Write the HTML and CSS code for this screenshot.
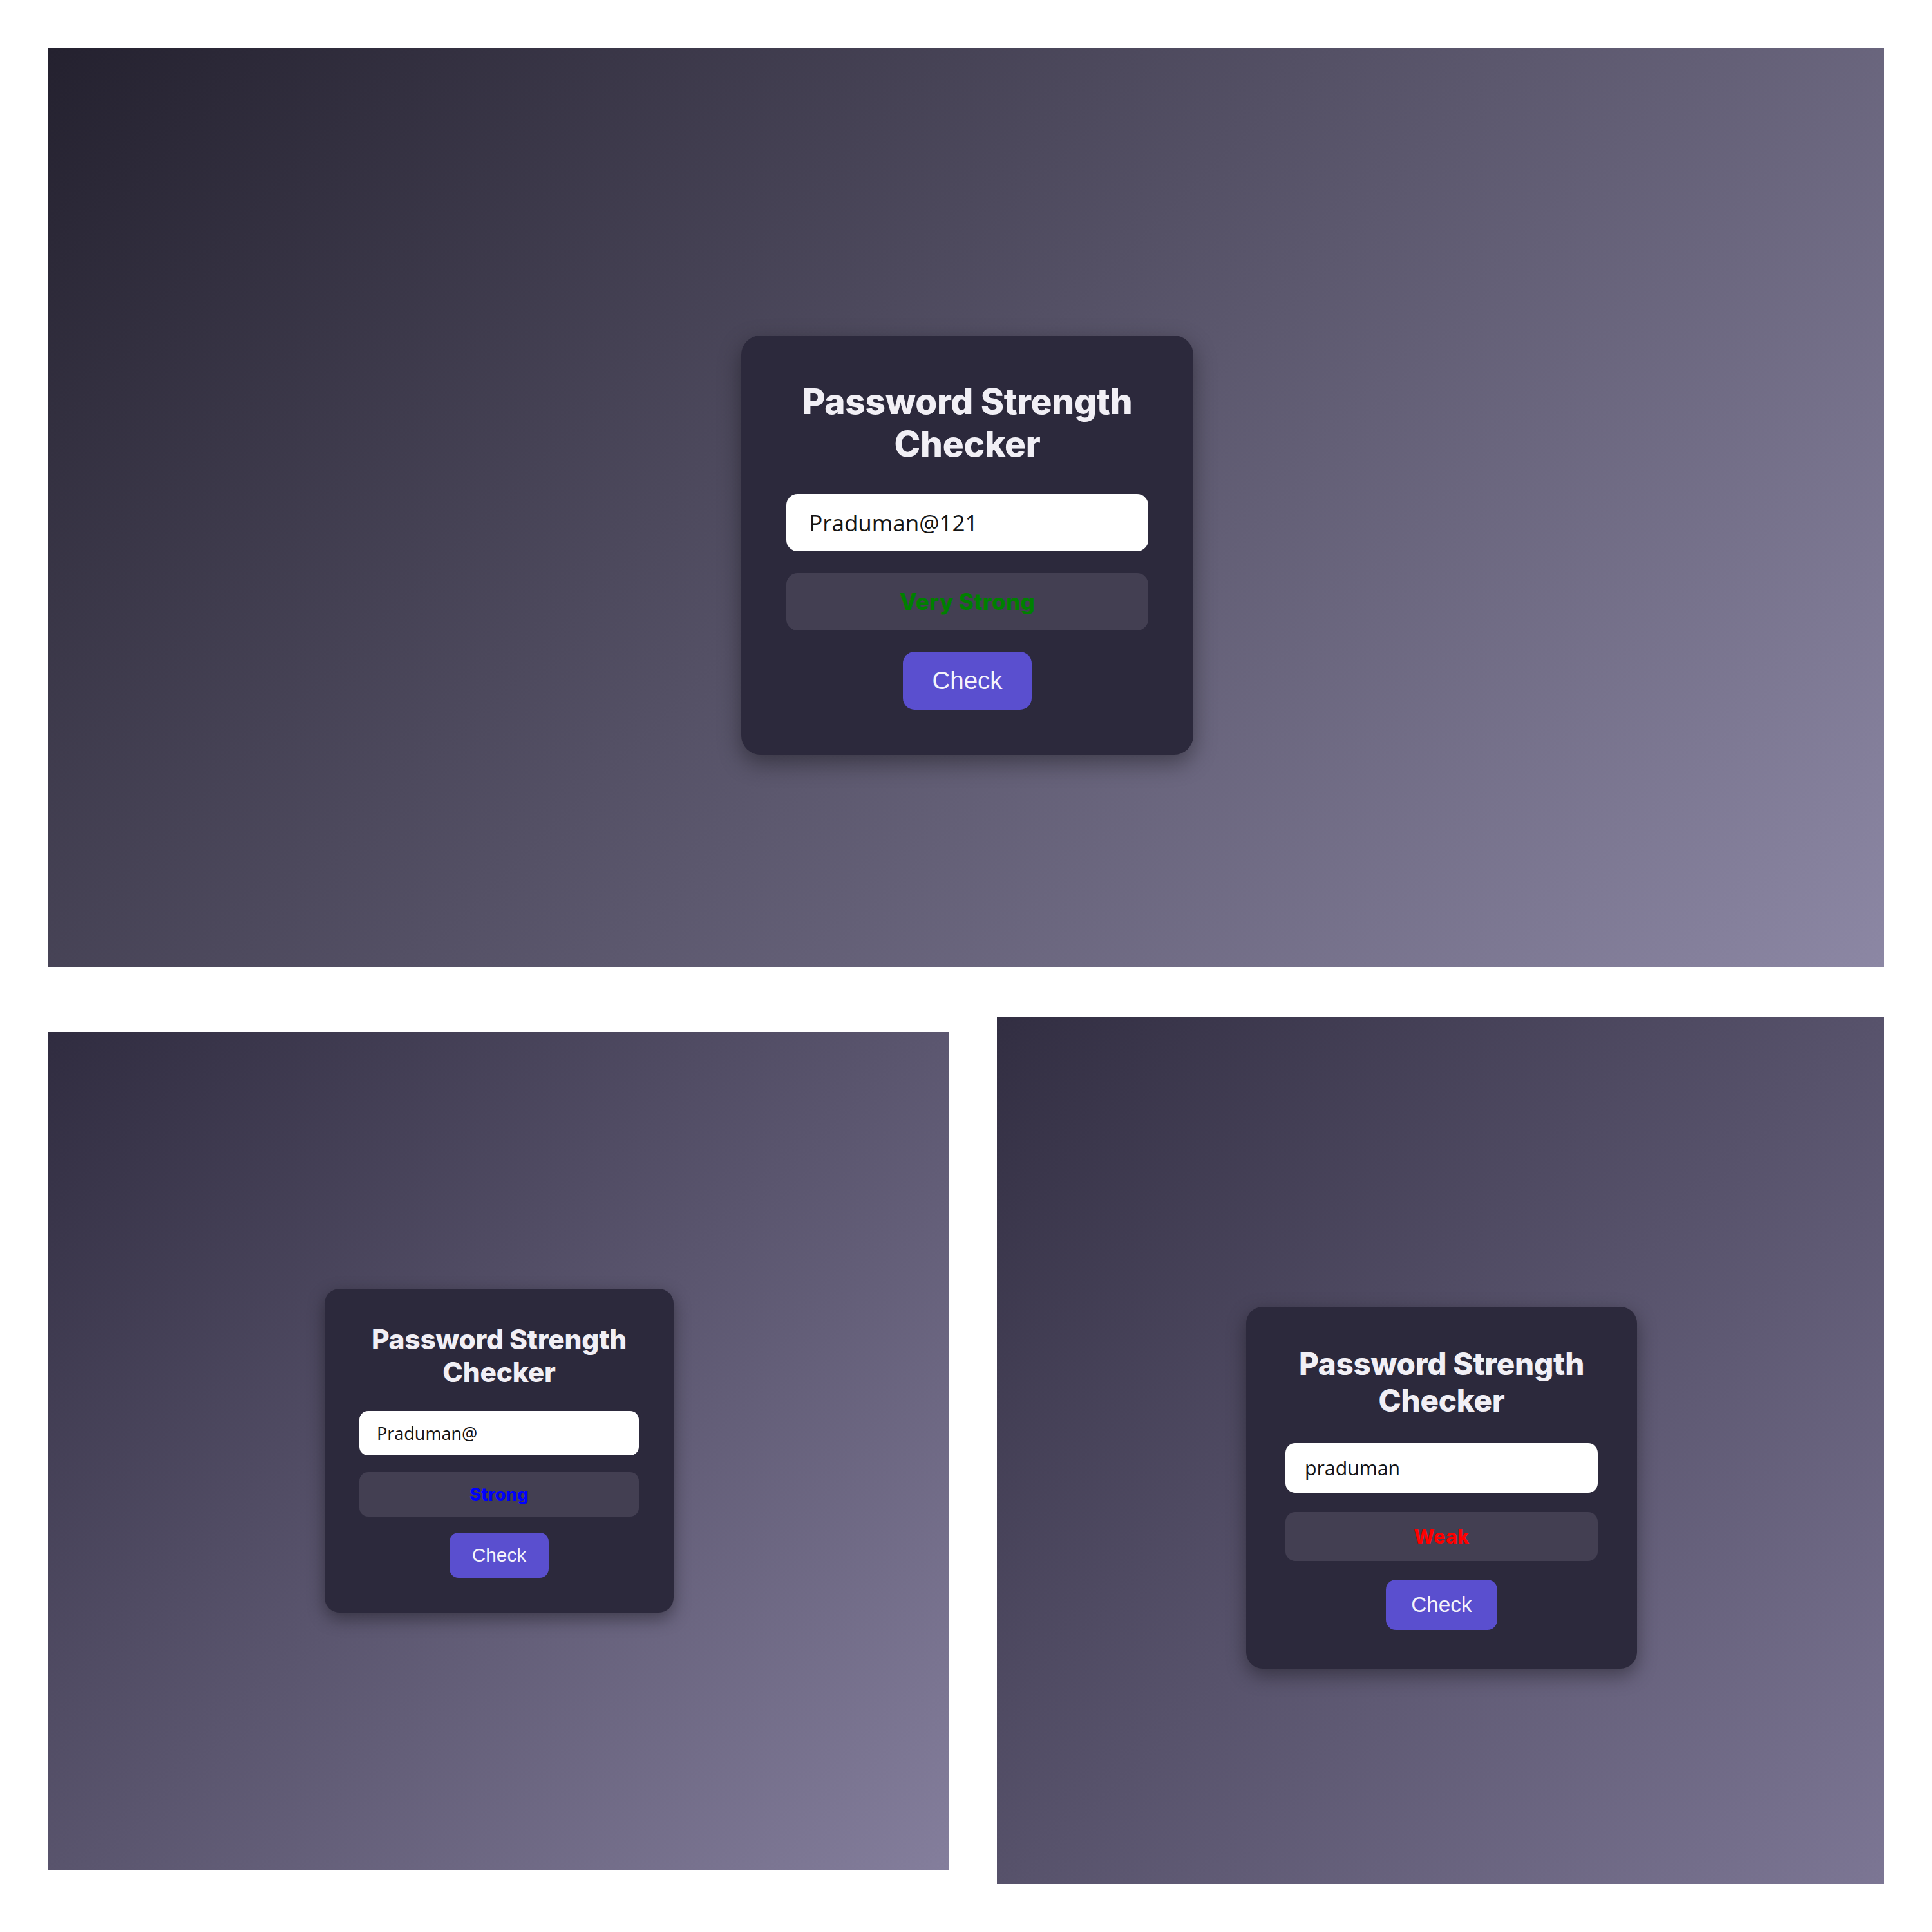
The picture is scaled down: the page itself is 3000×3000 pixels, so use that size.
FILE: index.html
```html
<!DOCTYPE html>
<html lang="en">
<head>
<meta charset="utf-8">
<title>Password Strength Checker</title>
<link rel="stylesheet" href="styles.css">
</head>
<body>
<div class="sheet">
  <section class="panel panel-top">
    <div class="card">
      <h2 class="title">Password Strength Checker</h2>
      <input class="field" type="text" value="Praduman@121">
      <div class="result very-strong">Very Strong</div>
      <button class="btn" type="button">Check</button>
    </div>
  </section>
  <div class="row">
    <section class="panel panel-bl">
      <div class="card">
        <h2 class="title">Password Strength Checker</h2>
        <input class="field" type="text" value="Praduman@">
        <div class="result strong">Strong</div>
        <button class="btn" type="button">Check</button>
      </div>
    </section>
    <section class="panel panel-br">
      <div class="card">
        <h2 class="title">Password Strength Checker</h2>
        <input class="field" type="text" value="praduman">
        <div class="result weak">Weak</div>
        <button class="btn" type="button">Check</button>
      </div>
    </section>
  </div>
</div>
</body>
</html>
```
FILE: styles.css
```css
html, body {
  margin: 0;
  padding: 0;
  background: #ffffff;
}

.sheet {
  width: 3000px;
  height: 3000px;
  box-sizing: border-box;
  padding: 75px 75px 0 75px;
  display: flex;
  flex-direction: column;
  gap: 78px;
}

.row {
  display: flex;
  align-items: flex-start;
  gap: 75px;
}

.panel {
  display: flex;
  justify-content: center;
  align-items: center;
  box-sizing: border-box;
}

.panel-top {
  width: 2850px;
  height: 1426px;
  padding-top: 117px;
  padding-left: 4px;
  background: linear-gradient(135deg, #24212f 0%, #8c87a4 100%);
}

.panel-bl {
  width: 1398px;
  height: 1301px;
  margin-top: 23px;
  padding-left: 2px;
  background: linear-gradient(135deg, #302c40 0%, #847e9c 100%);
}

.panel-br {
  width: 1377px;
  height: 1346px;
  padding-top: 116px;
  padding-left: 4px;
  background: linear-gradient(135deg, #322e42 0%, #7c7694 100%);
}

.panel-top .card { font-size: 35px; }
.panel-bl .card { font-size: 27.05px; }
.panel-br .card { font-size: 30.25px; }

.card {
  width: 16.05em;
  padding: 2em;
  background: #2c293c;
  border-radius: 0.86em;
  box-shadow: 0 0.35em 1em rgba(0, 0, 0, 0.38);
  display: flex;
  flex-direction: column;
  align-items: center;
  font-family: Inter, "Open Sans", sans-serif;
}

.title {
  margin: 0 0 0.8em 0;
  font-size: 1.57em;
  line-height: 1.2;
  font-weight: 800;
  letter-spacing: -0.005em;
  color: #f1eff5;
  text-align: center;
}

.field {
  width: 100%;
  box-sizing: border-box;
  height: 2.54em;
  margin: 0 0 0.97em 0;
  padding: 0 1em;
  border: none;
  outline: none;
  border-radius: 0.5em;
  background: #ffffff;
  color: #141414;
  font-family: "Open Sans", sans-serif;
  font-size: 1em;
}

.result {
  width: 100%;
  box-sizing: border-box;
  height: 2.54em;
  margin: 0 0 0.95em 0;
  border-radius: 0.5em;
  background: #433f52;
  display: flex;
  align-items: center;
  justify-content: center;
  font-weight: 800;
  font-size: 1em;
  letter-spacing: 0.01em;
}

.very-strong { color: #008000; }
.strong { color: #0000ff; }
.weak { color: #ff0000; }

.btn {
  width: 5.2em;
  height: 2.33em;
  border: none;
  border-radius: 0.47em;
  background: #5a4fcf;
  color: #f4f3fa;
  font-family: "Liberation Sans", Arial, sans-serif;
  font-size: 1.1em;
  padding: 0;
}
```
